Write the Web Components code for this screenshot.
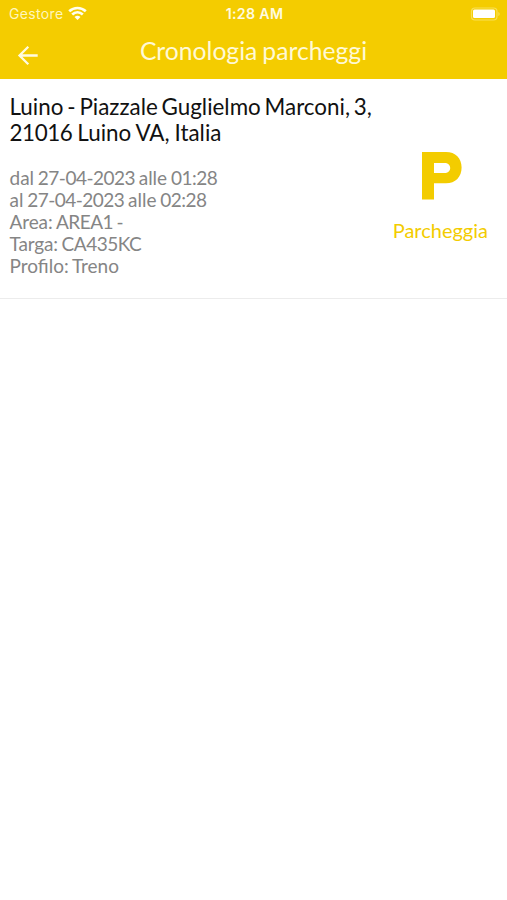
<!DOCTYPE html>
<html lang="it">
<head>
<meta charset="utf-8">
<title>Cronologia parcheggi</title>
<style>
html, body { margin: 0; height: 100%; background: #fff; }
</style>
</head>
<body>
<parking-app></parking-app>
<script>
class BaseElement extends HTMLElement {
  constructor() {
    super();
    this.attachShadow({ mode: 'open' }).innerHTML = this.constructor.markup;
  }
}

class StatusBar extends BaseElement {
  static markup = `
    <style>
      :host { display: grid; grid-template-columns: 1fr auto 1fr; align-items: center; height: 27px;
        padding: 0 7px 0 9px; box-sizing: border-box; color: #fffbe0; font: 14px/27px Inter, sans-serif; }
      .left { display: flex; align-items: center; gap: 5px; }
      .carrier { letter-spacing: .34px; color: #fff6bd; }
      .time { font-weight: 600; font-size: 14.2px; letter-spacing: .3px; }
      .right { display: flex; justify-content: flex-end; }
      svg { display: block; }
    </style>
    <div class="left"><span class="carrier">Gestore</span>
      <svg width="19" height="15" viewBox="0 0 19 15" fill="none" stroke="#fffef0" stroke-width="2.7">
        <path d="M1.2 5.3C6 .9 13 .9 17.8 5.3"/>
        <path d="M4.2 8.6C7.3 5.7 11.7 5.7 14.8 8.6"/>
        <path d="M9.5 14 6.5 11Q9.5 8.7 12.5 11Z" fill="#fffef0" stroke="none"/>
      </svg></div>
    <span class="time">1:28 AM</span>
    <div class="right">
      <svg width="30" height="14" viewBox="0 0 30 14">
        <rect x="1.5" y="1" width="25.5" height="12" rx="3.5" fill="none" stroke="#f8df55" stroke-width="1.2"/>
        <rect x="3" y="2.5" width="22" height="8.5" rx="1.5" fill="#fff"/>
        <path d="M28.3 5q1.4.5 1.4 2t-1.4 2z" fill="#f8df55"/>
      </svg>
    </div>`;
}

class NavBar extends BaseElement {
  static markup = `
    <style>
      :host { display: grid; grid-template-columns: 56px 1fr 56px; height: 52px; color: #fff9d6;
        font: 24.7px/48px Lato, sans-serif; word-spacing: -1.3px; }
      svg { display: block; margin: 18px 0 0 17px; }
      .title { text-align: center; white-space: nowrap; }
    </style>
    <svg width="22" height="21" viewBox="0 0 22 21" fill="none" stroke="#fffbe0" stroke-width="2.3" stroke-linejoin="miter">
      <path d="M20.7 10.5H3M11.3 1.8 2.5 10.5l8.8 8.7"/>
    </svg>
    <div class="title"><slot></slot></div>`;
}

class ParkAction extends BaseElement {
  static markup = `
    <style>
      :host { display: flex; flex-direction: column; align-items: center; color: #f3cc00;
        font: 20px/24px Lato, sans-serif; }
      svg { display: block; margin: 0 0 18px 3px; }
    </style>
    <svg width="40" height="48" viewBox="0 0 40 48">
      <path fill="currentColor" fill-rule="evenodd" d="M0 0H24C33.5 0 39.6 6.2 39.6 15.5S33.5 31.3 24 31.3H12V47.5H0ZM12 11V21H23C26 21 28.2 18.8 28.2 16S26 11 23 11Z"/>
    </svg>
    <span><slot></slot></span>`;
}

class ParkingEntry extends BaseElement {
  static markup = `
    <style>
      :host { display: flex; justify-content: space-between; height: 219.5px; box-sizing: border-box;
        padding: 14px 19px 0 9.5px; border-bottom: 1.5px solid #ececec; font-family: Lato, sans-serif; }
      .address { padding-top: 1px; font-size: 22.4px; line-height: 26px; color: #111; white-space: nowrap; word-spacing: -1.9px; }
      .details { margin-top: 21px; font-size: 19px; line-height: 22px; color: #858585; white-space: nowrap; word-spacing: -1.1px; }
      .action { padding-top: 59px; }
    </style>
    <div>
      <div class="address"><slot name="address"></slot></div>
      <div class="details"><slot name="details"></slot></div>
    </div>
    <div class="action"><slot name="action"></slot></div>`;
}

class ParkingApp extends BaseElement {
  static markup = `
    <style>
      :host { display: block; min-height: 100%; background: #fff; }
      header { background: #f4cc00; }
      .row { display: block; }
      .num { letter-spacing: -.52px; }
      .city { word-spacing: -.8px; }
      .city .num { letter-spacing: -.4px; }
      .area { letter-spacing: -.1px; word-spacing: -1.4px; }
      .code { letter-spacing: -.5px; }
      .plate { letter-spacing: -.15px; word-spacing: -1px; }
    </style>
    <header><status-bar></status-bar><nav-bar>Cronologia parcheggi</nav-bar></header>
    <main>
      <parking-entry>
        <div slot="address"><span class="row">Luino - Piazzale Guglielmo Marconi, 3,</span><span class="row city"><span class="num">21016</span> Luino VA, Italia</span></div>
        <div slot="details"><span class="row">dal <span class="num">27-04-2023</span> alle <span class="num">01:28</span></span><span class="row">al <span class="num">27-04-2023</span> alle <span class="num">02:28</span></span><span class="row area">Area: <span class="code">AREA1</span> -</span><span class="row plate">Targa: <span class="code">CA435KC</span></span><span class="row">Profilo: Treno</span></div>
        <park-action slot="action">Parcheggia</park-action>
      </parking-entry>
    </main>`;
}

customElements.define('status-bar', StatusBar);
customElements.define('nav-bar', NavBar);
customElements.define('park-action', ParkAction);
customElements.define('parking-entry', ParkingEntry);
customElements.define('parking-app', ParkingApp);
</script>
</body>
</html>
